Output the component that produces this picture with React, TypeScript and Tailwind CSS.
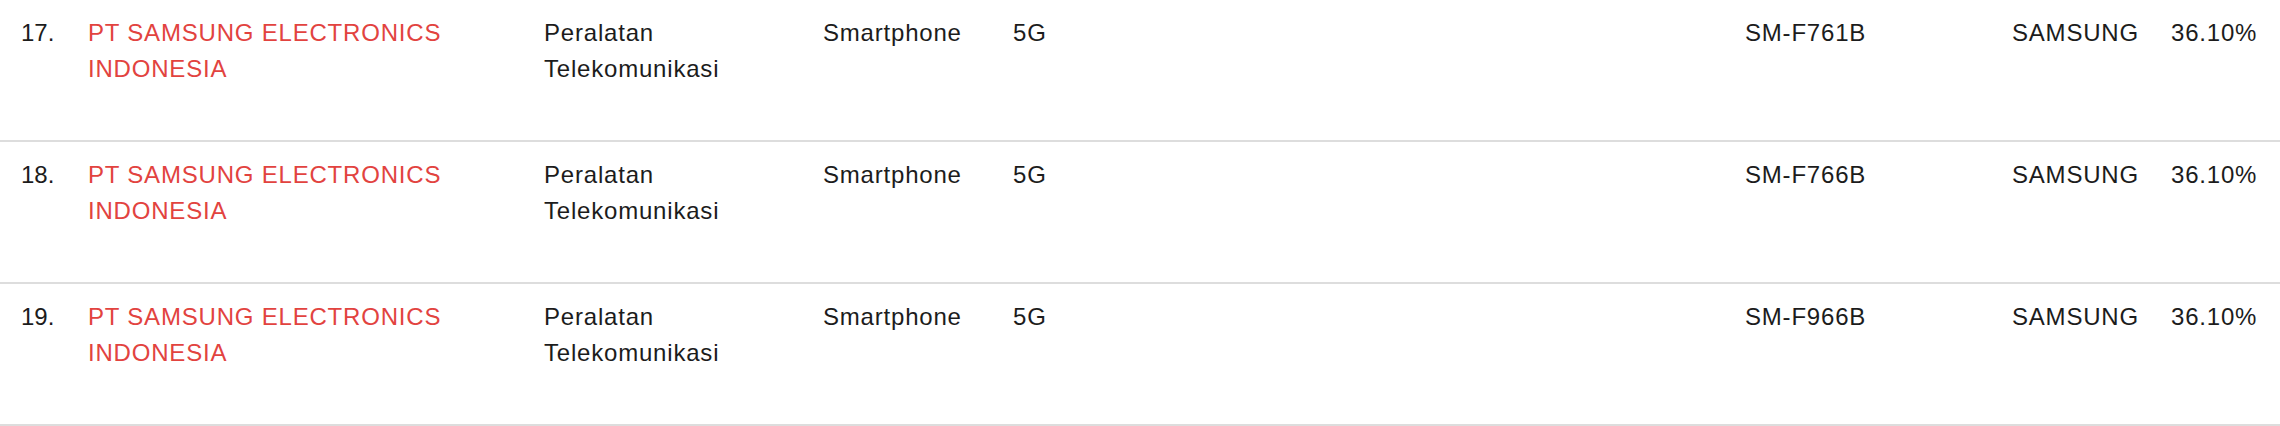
const rows = [
  { no: 17, model: "SM-F761B" },
  { no: 18, model: "SM-F766B" },
  { no: 19, model: "SM-F966B" },
];

export default function App() {
  return (
    <div
      className="w-[2280px] bg-white text-[24px] leading-9 text-[#1c1c1c] tracking-[0.8px]"
      style={{ fontFamily: '"Liberation Sans", Arial, sans-serif' }}
    >
      {rows.map((r) => (
        <div
          key={r.no}
          className="box-border grid h-[142px] grid-cols-[88px_456px_279px_190px_732px_267px_159px_1fr] border-b-2 border-[#dddddd] pt-[15px]"
        >
          <div className="pl-[21px] tracking-normal">{r.no}.</div>
          <div className="text-[#e2433f]">
            PT SAMSUNG ELECTRONICS
            <br />
            INDONESIA
          </div>
          <div>
            Peralatan
            <br />
            Telekomunikasi
          </div>
          <div>Smartphone</div>
          <div>5G</div>
          <div>{r.model}</div>
          <div>SAMSUNG</div>
          <div>36.10%</div>
        </div>
      ))}
    </div>
  );
}
